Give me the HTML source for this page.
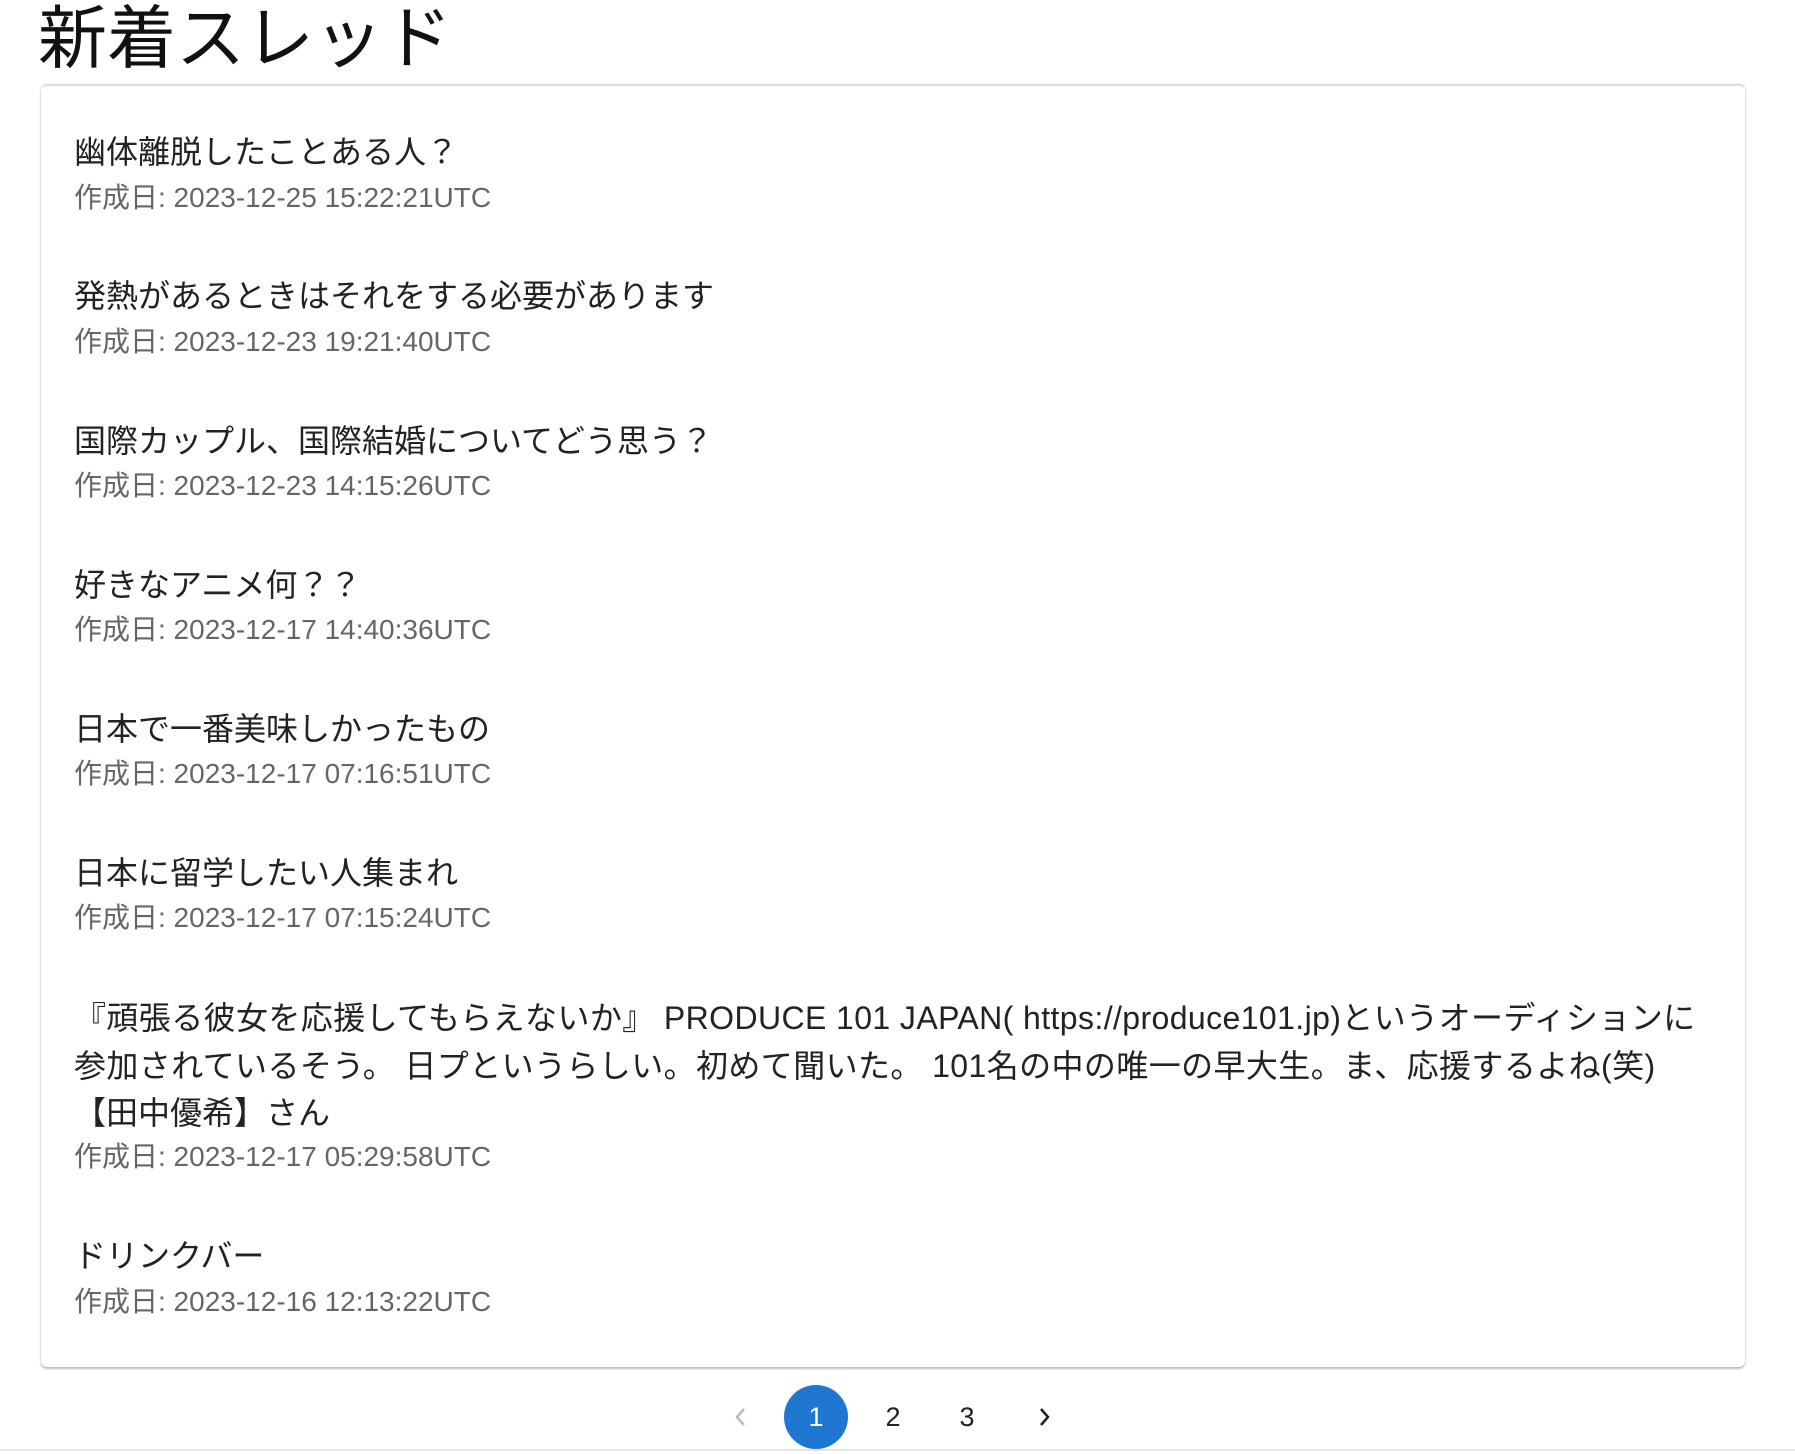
<!DOCTYPE html>
<html><head><meta charset="utf-8"><style>
html,body{margin:0;padding:0;background:#fff;width:1795px;height:1454px;overflow:hidden;position:relative;font-family:"Liberation Sans","Noto Sans CJK JP",sans-serif;}
.h{position:absolute;left:38px;top:-6px;font-size:69px;line-height:90px;color:#111;margin:0;font-weight:400;}
.card{position:absolute;left:41px;top:84px;width:1704px;height:1281px;background:#fff;border-radius:6px;border-top:2px solid #ddd;box-shadow:0 2px 2px rgba(0,0,0,.25),0 0 2px rgba(0,0,0,.12);}
.t{position:absolute;left:74px;font-size:32px;line-height:48px;color:#222;white-space:nowrap;}
.d{position:absolute;left:74px;font-size:28px;line-height:40px;color:#666;white-space:nowrap;}
.pg{position:absolute;top:1385px;height:64px;line-height:64px;font-size:27px;color:#222;text-align:center;}
.line{position:absolute;left:0;top:1449px;width:1795px;height:2px;background:#e5e5e5;}
</style></head><body>
<h1 class="h">新着スレッド</h1>
<div class="card"></div>
<div class="t" style="top:128px">幽体離脱したことある人？</div>
<div class="d" style="top:178px">作成日: 2023-12-25 15:22:21UTC</div>
<div class="t" style="top:272px">発熱があるときはそれをする必要があります</div>
<div class="d" style="top:322px">作成日: 2023-12-23 19:21:40UTC</div>
<div class="t" style="top:417px">国際カップル、国際結婚についてどう思う？</div>
<div class="d" style="top:466px">作成日: 2023-12-23 14:15:26UTC</div>
<div class="t" style="top:561px">好きなアニメ何？？</div>
<div class="d" style="top:610px">作成日: 2023-12-17 14:40:36UTC</div>
<div class="t" style="top:705px">日本で一番美味しかったもの</div>
<div class="d" style="top:754px">作成日: 2023-12-17 07:16:51UTC</div>
<div class="t" style="top:849px">日本に留学したい人集まれ</div>
<div class="d" style="top:898px">作成日: 2023-12-17 07:15:24UTC</div>
<div class="t" style="top:994px;letter-spacing:0.4px">『頑張る彼女を応援してもらえないか』 PRODUCE 101 JAPAN( https://produce101.jp)というオーディションに</div>
<div class="t" style="top:1042px;letter-spacing:0.4px">参加されているそう。 日プというらしい。初めて聞いた。 101名の中の唯一の早大生。ま、応援するよね(笑)</div>
<div class="t" style="top:1089px">【田中優希】さん</div>
<div class="d" style="top:1137px">作成日: 2023-12-17 05:29:58UTC</div>
<div class="t" style="top:1232px">ドリンクバー</div>
<div class="d" style="top:1282px">作成日: 2023-12-16 12:13:22UTC</div>
<svg style="position:absolute;left:731px;top:1405px" width="20" height="24" viewBox="0 0 20 24"><path d="M13 4 L6 12 L13 20" fill="none" stroke="#bbb" stroke-width="2.5"/></svg>
<div class="pg" style="left:784px;width:64px;border-radius:50%;background:#1f77d2;color:#fff">1</div>
<div class="pg" style="left:861px;width:64px">2</div>
<div class="pg" style="left:935px;width:64px">3</div>
<svg style="position:absolute;left:1034px;top:1405px" width="20" height="24" viewBox="0 0 20 24"><path d="M7 4 L14 12 L7 20" fill="none" stroke="#222" stroke-width="2.5"/></svg>
<div class="line"></div>
</body></html>
